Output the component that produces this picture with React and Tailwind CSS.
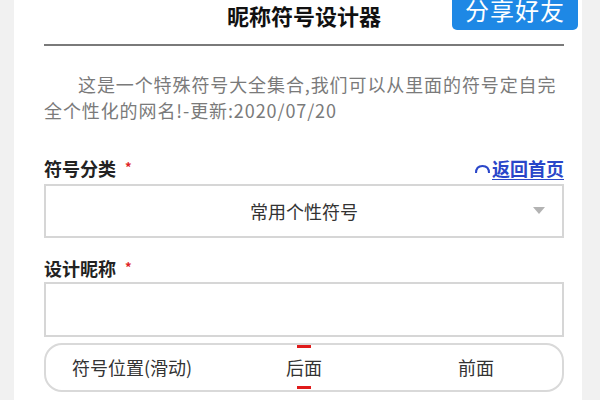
import React from "react";

const font = { fontFamily: '"Noto Sans CJK SC", "Noto Sans", sans-serif' };

function Label({ children }) {
  return (
    <div className="flex items-center h-[26px] text-[18px] font-bold text-[#222] leading-[26px]">
      {children}
      <span className="ml-[9px] text-[13px] text-[#e02424] leading-none -mt-[4px]">*</span>
    </div>
  );
}

export default function App() {
  return (
    <div className="w-[600px] h-[400px] overflow-hidden bg-[#f1f1f1]" style={font}>
      <div className="ml-[14px] w-[568px] h-full bg-white pl-[30px] pr-[18px]">
        {/* header */}
        <div className="relative h-[44px] border-b-2 border-[#7a7a7a] box-content">
          <h1 className="text-center text-[22px] font-bold text-[#111] leading-[30px]">
            昵称符号设计器
          </h1>
          <button className="absolute right-[-14px] top-[-10px] w-[126px] h-[40px] rounded-[5px] bg-[#1e88e5] text-white text-[24px] leading-[30px] tracking-[1px]">
            分享好友
          </button>
        </div>

        {/* description */}
        <p className="mt-[25px] text-[18px] leading-[26px] tracking-[0.9px] text-[#7a7a7a] indent-[34px]">
          这是一个特殊符号大全集合,我们可以从里面的符号定自完全个性化的网名!-更新:2020/07/20
        </p>

        {/* category */}
        <div className="mt-[32px] flex items-center justify-between">
          <Label>符号分类</Label>
          <a className="flex items-center text-[18px] font-bold text-[#2a46c9] underline underline-offset-[3px] leading-[26px] cursor-pointer">
            <svg width="17" height="10" viewBox="0 0 17 10" className="mr-[1px] mt-[2px]">
              <path d="M2 9 Q2 2 8.5 2 Q15 2 15 9" fill="none" stroke="#2a46c9" strokeWidth="2" />
            </svg>
            <span>返回首页</span>
          </a>
        </div>
        <div className="mt-[3px] h-[54px] border-2 border-[#d6d6d6] flex items-center relative">
          <span className="flex-1 text-center text-[18px] text-[#333]">常用个性符号</span>
          <svg width="12" height="7" viewBox="0 0 12 7" className="absolute right-[17px] top-[21px]">
            <path d="M0 0 L12 0 L6 7 Z" fill="#b3b3b3" />
          </svg>
        </div>

        {/* nickname */}
        <div className="mt-[17px]">
          <Label>设计昵称</Label>
        </div>
        <div className="mt-[1px] h-[55px] border-2 border-[#d6d6d6]"></div>

        {/* position picker */}
        <div className="mt-[6px] h-[49px] rounded-[18px] border-2 border-[#d9d9d9] grid grid-cols-3 items-center text-[18px] text-[#333]">
          <span className="text-center">符号位置(滑动)</span>
          <span className="relative h-full flex items-center justify-center">
            <span className="absolute top-[0px] left-1/2 -translate-x-1/2 w-[14px] h-[3px] bg-[#e01b1b]"></span>
            后面
            <span className="absolute bottom-[1px] left-1/2 -translate-x-1/2 w-[14px] h-[3px] bg-[#e01b1b]"></span>
          </span>
          <span className="text-center">前面</span>
        </div>
      </div>
    </div>
  );
}
